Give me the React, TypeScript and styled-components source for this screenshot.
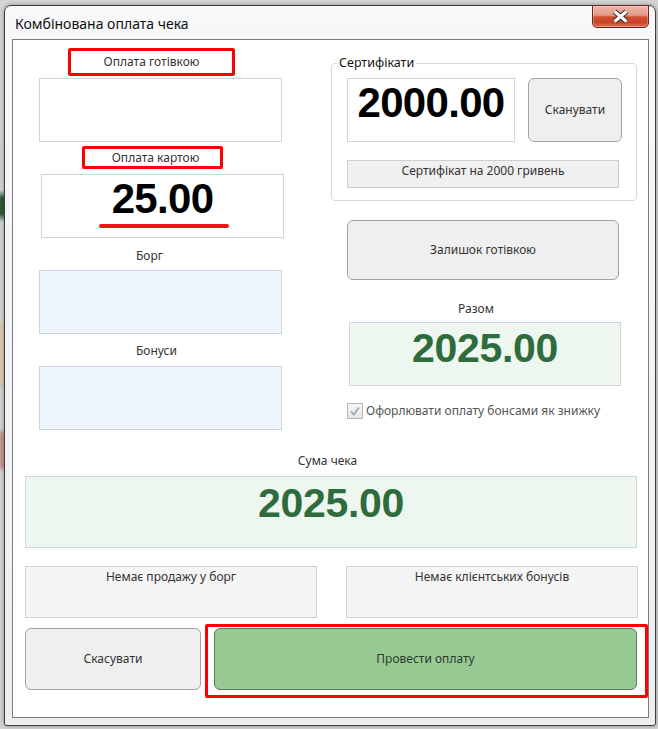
import React from "react";
import styled, { createGlobalStyle } from "styled-components";

const Global = createGlobalStyle`
  html, body { margin: 0; padding: 0; }
  body {
    width: 658px;
    height: 729px;
    overflow: hidden;
    font-family: "Noto Sans", "Open Sans", sans-serif;
    background-color: #d4d4d4;
    background-repeat: no-repeat;
    background-position: left top;
    background-size: 4px 100%;
    background-image: linear-gradient(
      to bottom,
      #d4d4d4 0, #d4d4d4 190px,
      #2f5a3c 198px, #2f5a3c 214px,
      #d4d4d4 222px, #d4d4d4 320px,
      #d8ccb2 326px, #d8ccb2 384px,
      #d4d4d4 390px, #d4d4d4 428px,
      #c49896 434px, #c49896 466px,
      #d4d4d4 472px
    );
  }
`;

/* ---------- window chrome ---------- */

const Window = styled.div`
  box-sizing: border-box;
  margin: 5px 0 0 4px;
  width: 652px;
  height: 721px;
  border: 1px solid #3c3c3c;
  border-radius: 7px 7px 3px 3px;
  background: linear-gradient(to bottom, #f7f8f9, #eceef0);
  box-shadow: 0 0 4px rgba(0, 0, 0, 0.35);
  padding: 0 6px 7px 7px;
  display: flex;
  flex-direction: column;
`;

const TitleBar = styled.header`
  height: 33px;
  display: flex;
  align-items: flex-start;
`;

const Title = styled.h1`
  margin: 0;
  padding: 10px 0 0 3px;
  font: 400 14px/16px "Noto Sans", "Open Sans", sans-serif;
  color: #111;
`;

const CloseButton = styled.button`
  margin: -1px 0 0 auto;
  width: 57px;
  height: 23px;
  padding: 0;
  box-sizing: border-box;
  border: 1px solid #6e2518;
  border-radius: 0 0 5px 5px;
  background: linear-gradient(
    to bottom,
    #eeb6a8 0%,
    #e39a87 44%,
    #d0502f 52%,
    #c8442a 78%,
    #db7250 100%
  );
  box-shadow: inset 0 0 0 1px rgba(255, 255, 255, 0.3);
  display: flex;
  align-items: center;
  justify-content: center;
`;

/* ---------- dialog body ---------- */

const Panel = styled.main`
  box-sizing: border-box;
  flex: 1;
  border: 1px solid #7b7b7b;
  background: #fff;
  padding: 8px 10px 0 12px;
  display: flex;
  flex-direction: column;
  color: #333;
  font: 400 12px/16px "Noto Sans", "Open Sans", sans-serif;
`;

const Top = styled.div`
  display: flex;
  align-items: flex-start;
`;

const LeftCol = styled.div`
  width: 245px;
  margin-left: 14px;
  display: flex;
  flex-direction: column;
  align-items: flex-start;
`;

const RightCol = styled.div`
  width: 306px;
  margin-left: 47px;
  display: flex;
  flex-direction: column;
  align-items: flex-start;
`;

const MarkedCaption = styled.div<{ $w: number; $h: number; $ml: number; $mt?: number; $pl?: number }>`
  box-sizing: border-box;
  width: ${(p) => p.$w}px;
  height: ${(p) => p.$h}px;
  margin: ${(p) => p.$mt ?? 0}px 0 0 ${(p) => p.$ml}px;
  padding-left: ${(p) => p.$pl ?? 0}px;
  border: 3px solid #ff0000;
  border-radius: 2px;
  display: flex;
  align-items: center;
  justify-content: center;
`;

const Caption = styled.div<{ $mt: number; $ml?: number; $pr?: number; $center?: boolean }>`
  align-self: stretch;
  height: 16px;
  margin: ${(p) => p.$mt}px 0 0 ${(p) => p.$ml ?? 0}px;
  padding-right: ${(p) => p.$pr ?? 0}px;
  text-align: ${(p) => (p.$center ? "center" : "left")};
`;

type Tone = "white" | "blue" | "green" | "gray";
const toneBg: Record<Tone, string> = {
  white: "#ffffff",
  blue: "#eef5fe",
  green: "#eef7ef",
  gray: "#f4f4f4",
};

const Field = styled.div<{ $w: number; $h: number; $ml?: number; $mt?: number; $tone?: Tone; $pt?: number }>`
  box-sizing: border-box;
  flex: none;
  width: ${(p) => p.$w}px;
  height: ${(p) => p.$h}px;
  margin: ${(p) => p.$mt ?? 0}px 0 0 ${(p) => p.$ml ?? 0}px;
  padding-top: ${(p) => p.$pt ?? 0}px;
  border: 1px solid #cfd5dc;
  background: ${(p) => toneBg[p.$tone ?? "white"]};
  display: flex;
  flex-direction: column;
  align-items: center;
`;

const Amount = styled.div<{ $green?: boolean }>`
  font: 700 ${(p) => (p.$green ? 41 : 42)}px/42px "Liberation Sans", Arial, sans-serif;
  letter-spacing: ${(p) => (p.$green ? "-0.3px" : "-0.7px")};
  color: ${(p) => (p.$green ? "#2e6b3d" : "#000")};
`;

const Underline = styled.div`
  width: 130px;
  height: 4px;
  margin: 4px 0 0 3px;
  border-radius: 2px;
  background: #f01414;
`;

const Group = styled.section`
  position: relative;
  box-sizing: border-box;
  width: 306px;
  margin-top: 15px;
  padding: 14px 14px 12px 15px;
  border: 1px solid #d3dce4;
  border-radius: 4px;
`;

const GroupTitle = styled.h2`
  position: absolute;
  top: -9px;
  left: 5px;
  margin: 0;
  padding: 0 2px;
  background: #fff;
  font: 400 12.5px/16px "Noto Sans", "Open Sans", sans-serif;
  color: #111;
`;

const CertRow = styled.div`
  display: flex;
  gap: 13px;
`;

const Button = styled.button<{ $w: number; $h: number; $ml?: number; $mt?: number; $primary?: boolean }>`
  box-sizing: border-box;
  flex: none;
  width: ${(p) => p.$w}px;
  height: ${(p) => p.$h}px;
  margin: ${(p) => p.$mt ?? 0}px 0 0 ${(p) => p.$ml ?? 0}px;
  padding: 0;
  border: 1px solid ${(p) => (p.$primary ? "#55805a" : "#a2a2a2")};
  border-radius: 6px;
  background: ${(p) => (p.$primary ? "#98cb94" : "#efefef")};
  color: ${(p) => (p.$primary ? "#2c3a2c" : "#333")};
  font: 400 12px/16px "Noto Sans", "Open Sans", sans-serif;
`;

const Note = styled.div<{ $w?: number; $h: number; $mt?: number; $bg: string }>`
  box-sizing: border-box;
  width: ${(p) => (p.$w ? `${p.$w}px` : "auto")};
  height: ${(p) => p.$h}px;
  margin-top: ${(p) => p.$mt ?? 0}px;
  padding-top: 2px;
  border: 1px solid #cfcfcf;
  background: ${(p) => p.$bg};
  text-align: center;
`;

const CheckRow = styled.label`
  display: flex;
  align-items: center;
  gap: 3px;
  margin: 17px 0 0 16px;
  color: #555;
  font-size: 12px;
`;

const CheckBox = styled.span`
  box-sizing: border-box;
  width: 16px;
  height: 16px;
  border: 1px solid #b4b4b4;
  background: linear-gradient(to bottom, #f6f6f6, #e7e7e7);
  display: flex;
  align-items: center;
  justify-content: center;
`;

const NoteRow = styled.div`
  display: grid;
  grid-template-columns: 1fr 1fr;
  gap: 29px;
  margin-top: 18px;
`;

const ActionRow = styled.div`
  display: flex;
  align-items: flex-start;
  margin-top: 6px;
`;

const Highlight = styled.div`
  margin-left: 4px;
  padding: 1px 8px 5px 6px;
  border: 3px solid #ff0000;
  border-radius: 2px;
`;

export default function App() {
  return (
    <>
      <Global />
      <Window>
        <TitleBar>
          <Title>Комбінована оплата чека</Title>
          <CloseButton aria-label="Закрити">
            <svg width="19" height="15" viewBox="0 0 19 15">
              <path d="M3.5 2.5 L15.5 12.5 M15.5 2.5 L3.5 12.5" stroke="#3a3431" strokeWidth="5.4" />
              <path d="M3.5 2.5 L15.5 12.5 M15.5 2.5 L3.5 12.5" stroke="#ffffff" strokeWidth="3" />
            </svg>
          </CloseButton>
        </TitleBar>

        <Panel>
          <Top>
            <LeftCol>
              <MarkedCaption $w={167} $h={28} $ml={29}>Оплата готівкою</MarkedCaption>
              <Field $w={243} $h={64} $mt={2} />
              <MarkedCaption $w={141} $h={23} $ml={43} $mt={4} $pl={6}>Оплата картою</MarkedCaption>
              <Field $w={243} $h={64} $ml={2} $mt={5} $pt={3}>
                <Amount>25.00</Amount>
                <Underline />
              </Field>
              <Caption $mt={10} $ml={97}>Борг</Caption>
              <Field $w={243} $h={64} $mt={6} $tone="blue" />
              <Caption $mt={9} $ml={97}>Бонуси</Caption>
              <Field $w={243} $h={64} $mt={7} $tone="blue" />
            </LeftCol>

            <RightCol>
              <Group>
                <GroupTitle>Сертифікати</GroupTitle>
                <CertRow>
                  <Field $w={168} $h={64} $pt={3}>
                    <Amount>2000.00</Amount>
                  </Field>
                  <Button $w={94} $h={64}>Сканувати</Button>
                </CertRow>
                <Note $w={272} $h={28} $mt={18} $bg="#f0f0f0">Сертифікат на 2000 гривень</Note>
              </Group>
              <Button $w={272} $h={60} $ml={16} $mt={19}>Залишок готівкою</Button>
              <Caption $mt={21} $pr={16} $center>Разом</Caption>
              <Field $w={272} $h={64} $ml={18} $mt={5} $tone="green" $pt={4}>
                <Amount $green>2025.00</Amount>
              </Field>
              <CheckRow>
                <CheckBox>
                  <svg width="12" height="12" viewBox="0 0 12 12">
                    <path d="M2 6.5 L4.8 9.5 L10 2.5" fill="none" stroke="#a9a9a9" strokeWidth="1.8" />
                  </svg>
                </CheckBox>
                Офорлювати оплату бонсами як знижку
              </CheckRow>
            </RightCol>
          </Top>

          <Caption $mt={23} $pr={8} $center>Сума чека</Caption>
          <Field $w={612} $h={72} $mt={7} $tone="green" $pt={5}>
            <Amount $green>2025.00</Amount>
          </Field>

          <NoteRow>
            <Note $h={52} $bg="#f5f5f5">Немає продажу у борг</Note>
            <Note $h={52} $bg="#f5f5f5">Немає клієнтських бонусів</Note>
          </NoteRow>

          <ActionRow>
            <Button $w={176} $h={62} $mt={4}>Скасувати</Button>
            <Highlight>
              <Button $w={423} $h={62} $primary>Провести оплату</Button>
            </Highlight>
          </ActionRow>
        </Panel>
      </Window>
    </>
  );
}
